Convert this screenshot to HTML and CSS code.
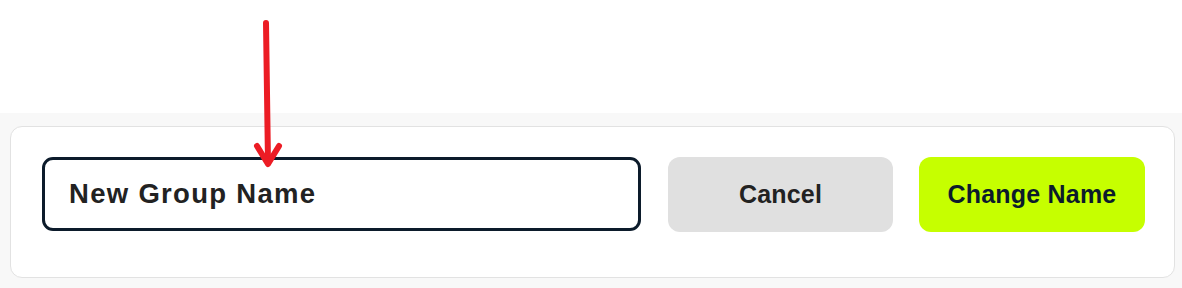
FILE: index.html
```html
<!DOCTYPE html>
<html lang="en">
<head>
<meta charset="utf-8">
<title>Change Group Name</title>
<link rel="stylesheet" href="styles.css">
</head>
<body>
<div class="top"></div>
<section class="band">
  <div class="card">
    <input class="name-input" type="text" value="New Group Name" aria-label="Group name">
    <button class="btn btn-cancel" type="button">Cancel</button>
    <button class="btn btn-primary" type="button">Change Name</button>
  </div>
</section>
<svg class="arrow" width="1182" height="288" viewBox="0 0 1182 288" aria-hidden="true">
  <g fill="none" stroke="#ec1c24" stroke-width="6" stroke-linecap="round" stroke-linejoin="round">
    <path d="M266 23 L268 163"/>
    <path d="M257 146 L268 164 L279 146"/>
  </g>
</svg>
</body>
</html>
```
FILE: styles.css
```css
html, body {
  margin: 0;
  padding: 0;
  background: #ffffff;
  width: 1182px;
  height: 288px;
  overflow: hidden;
  font-family: "Liberation Sans", Arial, sans-serif;
}

.top {
  height: 113px;
}

.band {
  background: #f8f8f8;
  height: 175px;
  box-sizing: border-box;
  padding: 13px 7px 0 10px;
}

.card {
  box-sizing: border-box;
  height: 152px;
  background: #ffffff;
  border: 1px solid #e2e2e2;
  border-radius: 12px;
  padding: 30px 29px 0 31px;
  display: flex;
  align-items: flex-start;
}

.name-input {
  box-sizing: border-box;
  width: 599px;
  height: 74px;
  border: 3px solid #0c1b2b;
  border-radius: 11px;
  padding: 0 0 0 24px;
  margin: 0;
  font-family: "Liberation Sans", Arial, sans-serif;
  font-weight: 700;
  font-size: 27.5px;
  letter-spacing: 1.3px;
  color: #222222;
  background: #ffffff;
  outline: none;
}

.btn {
  box-sizing: border-box;
  height: 75px;
  border: none;
  border-radius: 12px;
  margin: 0;
  padding: 0;
  font-family: "Liberation Sans", Arial, sans-serif;
  font-weight: 700;
  font-size: 25px;
  letter-spacing: 0.2px;
  cursor: pointer;
}

.btn-cancel {
  width: 225px;
  margin-left: 27px;
  background: #e0e0e0;
  color: #222222;
}

.btn-primary {
  width: 226px;
  margin-left: 26px;
  background: #c6ff00;
  color: #0c1b2b;
}

.arrow {
  position: absolute;
  left: 0;
  top: 0;
  pointer-events: none;
}
```
